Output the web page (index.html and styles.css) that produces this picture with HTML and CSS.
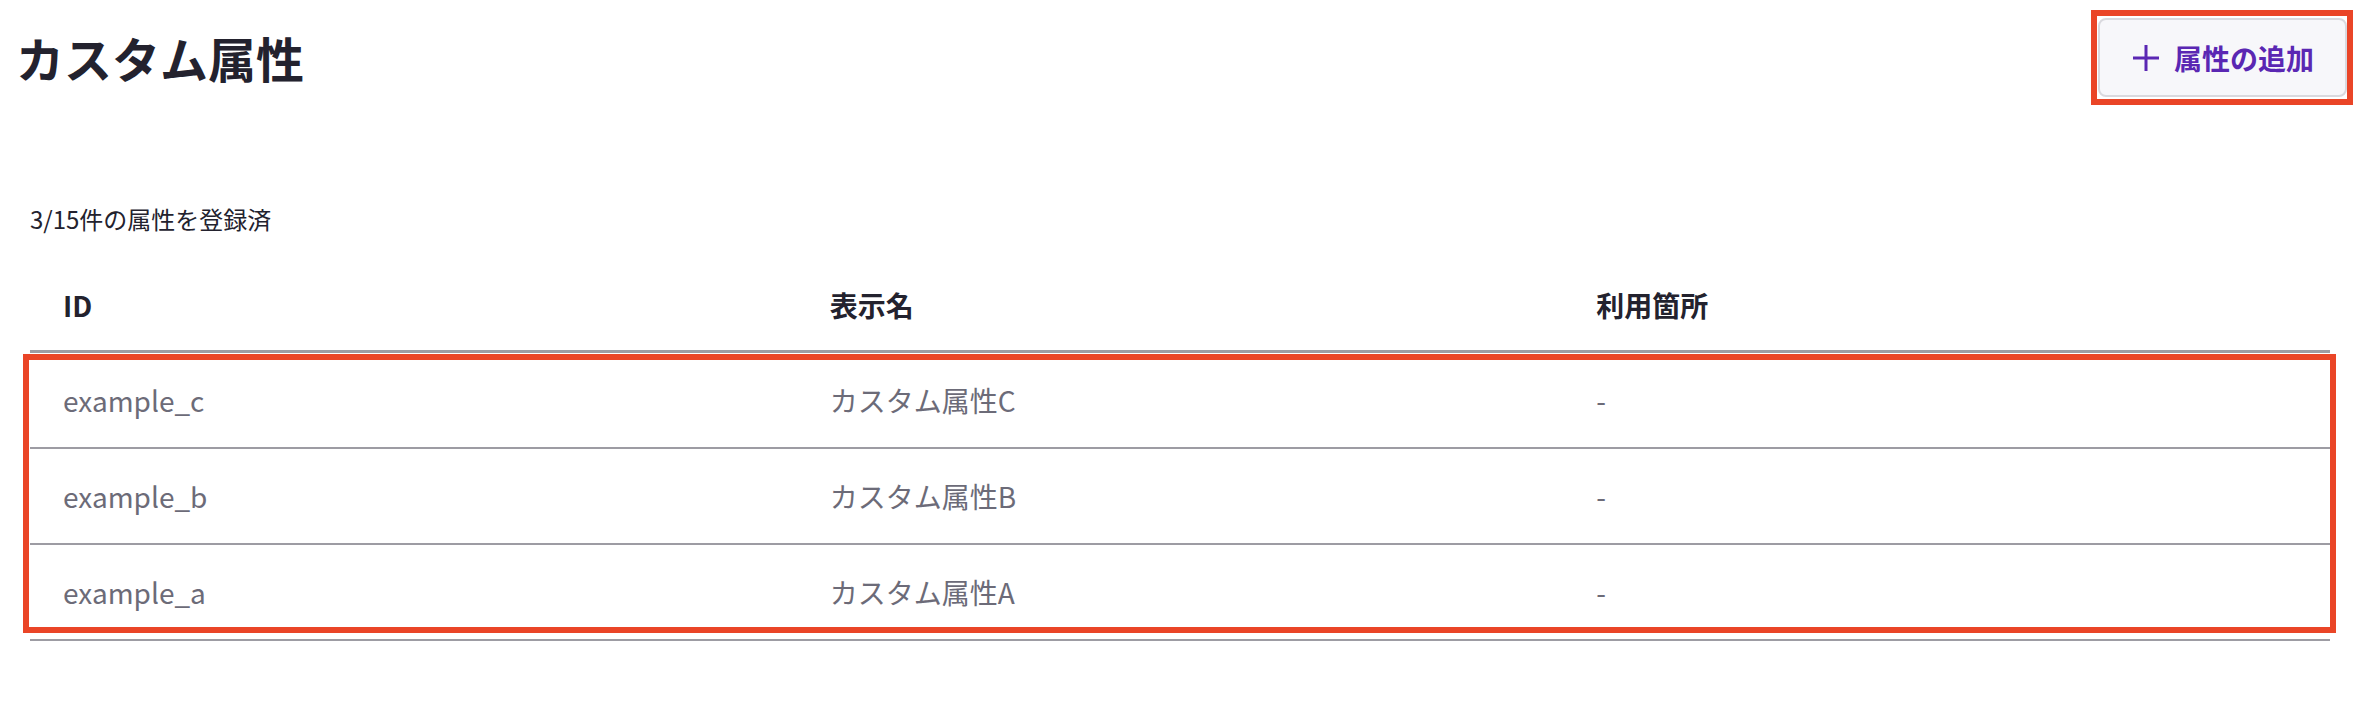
FILE: index.html
```html
<!DOCTYPE html>
<html lang="ja">
<head>
<meta charset="utf-8" />
<title>カスタム属性</title>
<link rel="stylesheet" href="styles.css">
</head>
<body>
<header class="page-head">
  <h1 class="page-title">カスタム属性</h1>
  <div class="mark-wrap mark-button">
    <button class="add-btn" type="button">
      <svg class="add-icon" viewBox="0 0 26 26" width="26" height="26" aria-hidden="true">
        <path d="M13 0v26M0 13h26" />
      </svg>
      <span>属性の追加</span>
    </button>
  </div>
</header>

<main class="content">
  <p class="count">3/15件の属性を登録済</p>
  <div class="mark-wrap mark-rows">
    <table class="attr-table">
      <thead>
        <tr><th>ID</th><th>表示名</th><th>利用箇所</th></tr>
      </thead>
      <tbody>
        <tr><td>example_c</td><td>カスタム属性C</td><td>-</td></tr>
        <tr><td>example_b</td><td>カスタム属性B</td><td>-</td></tr>
        <tr><td>example_a</td><td>カスタム属性A</td><td>-</td></tr>
      </tbody>
    </table>
  </div>
</main>
</body>
</html>
```

FILE: styles.css
```css
*, *::before, *::after {
  box-sizing: border-box;
}
html, body {
  margin: 0;
  background: #fff;
}
body {
  font-family: "Noto Sans CJK JP", "Noto Sans", sans-serif;
  color: #22212d;
}

/* header */
.page-head {
  display: flex;
  align-items: center;
  justify-content: space-between;
  padding: 18px 15px 0 16px;
}
.page-title {
  margin: 0;
  font-size: 48px;
  font-weight: 700;
  line-height: 79px;
  color: #23222e;
}
.add-btn {
  display: flex;
  align-items: center;
  justify-content: center;
  gap: 15px;
  width: 249px;
  height: 79px;
  padding: 0 0 0 2px;
  border: 2px solid #d9d9de;
  border-radius: 8px;
  background: #f7f7fa;
  color: #5a27b3;
  font-family: inherit;
  font-size: 28px;
  font-weight: 700;
  cursor: pointer;
}
.add-icon {
  fill: none;
  stroke: #5a27b3;
  stroke-width: 3;
}

/* red annotation outlines */
.mark-wrap {
  position: relative;
}
.mark-wrap::after {
  content: "";
  position: absolute;
  border: 6px solid #ea4527;
  pointer-events: none;
}
.mark-button::after {
  top: -8px;
  right: -6px;
  bottom: -8px;
  left: -7px;
}
.mark-rows::after {
  bottom: 8px;
  left: -7px;
  right: -6px;
  height: 279px;
}

/* content */
.content {
  padding: 0 32px 0 30px;
}
.count {
  margin: 106px 0 24px;
  font-size: 24px;
  line-height: 32px;
  color: #23222e;
}
.attr-table {
  width: 100%;
  border-collapse: separate;
  border-spacing: 0;
  table-layout: fixed;
}
.attr-table th {
  height: 94px;
  padding: 0 33px;
  text-align: left;
  font-size: 28px;
  font-weight: 700;
  color: #23222e;
  border-bottom: 3px solid #9d9ca3;
}
.attr-table td {
  height: 96px;
  padding: 0 33px;
  font-size: 28px;
  color: #6c6b78;
  border-bottom: 2px solid #9d9ca3;
}
```
